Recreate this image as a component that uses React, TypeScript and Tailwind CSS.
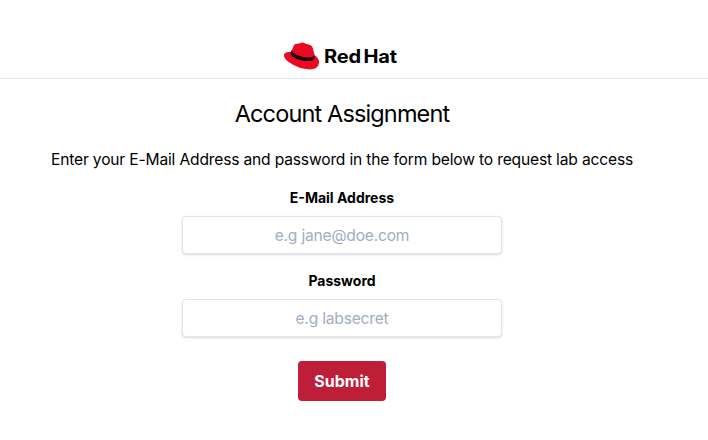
export default function App() {
  const input = "block h-[38px] w-[320px] rounded border border-[#e2e5f0] bg-white text-center text-[15.6px] tracking-[-0.2px] text-black shadow-[0_1px_3px_rgba(0,0,0,0.1),0_1px_2px_rgba(0,0,0,0.06)] placeholder:text-[#a0aec0] outline-none";
  return (
    <div className="h-[440px] w-[708px] overflow-hidden bg-white font-['Inter',sans-serif] text-black">
      <header className="flex h-[79px] border-b border-[#e2e4ee] pt-[42px] pl-[283px]">
        <div className="flex h-7 items-center gap-1">
          <svg width="37" height="28" viewBox="27 25 111 84">
            <path fill="#ed0924" d="M52 54 59 36Q61 30 69 30L78 29Q84 25 91 28Q94 31 101 32Q113 34 116 42L122 65Q136 74 135 88Q132 105 112 107Q78 109 45 86Q28 73 30 63Q32 54 52 54Z" />
            <path fill="#180408" d="M53 49C55 59 72 67 92 71C106 73 118 71 120 64L122 71C121 82 106 84 90 81C66 77 46 67 50 57Z" />
          </svg>
          <span className="mt-0.5 inline-block origin-left scale-x-[1.085] text-[18.5px] font-bold tracking-[-0.15px] whitespace-nowrap [word-spacing:-2px]">Red Hat</span>
        </div>
      </header>
      <main className="flex w-[684px] flex-col items-center">
        <h1 className="mt-[17px] text-[23.5px] leading-9 tracking-[-0.86px]">Account Assignment</h1>
        <p className="mt-4 text-[15.6px] leading-6 tracking-[-0.17px]">Enter your E-Mail Address and password in the form below to request lab access</p>
        <label className="mt-4 mb-2 text-sm leading-5 font-bold">E-Mail Address</label>
        <input className={input} placeholder="e.g jane@doe.com" />
        <label className="mt-[17px] mb-2 text-sm leading-5 font-bold">Password</label>
        <input className={input} placeholder="e.g labsecret" />
        <button className="mt-6 h-10 w-[88px] rounded bg-[#be1e37] text-base font-bold text-white">Submit</button>
      </main>
    </div>
  );
}
